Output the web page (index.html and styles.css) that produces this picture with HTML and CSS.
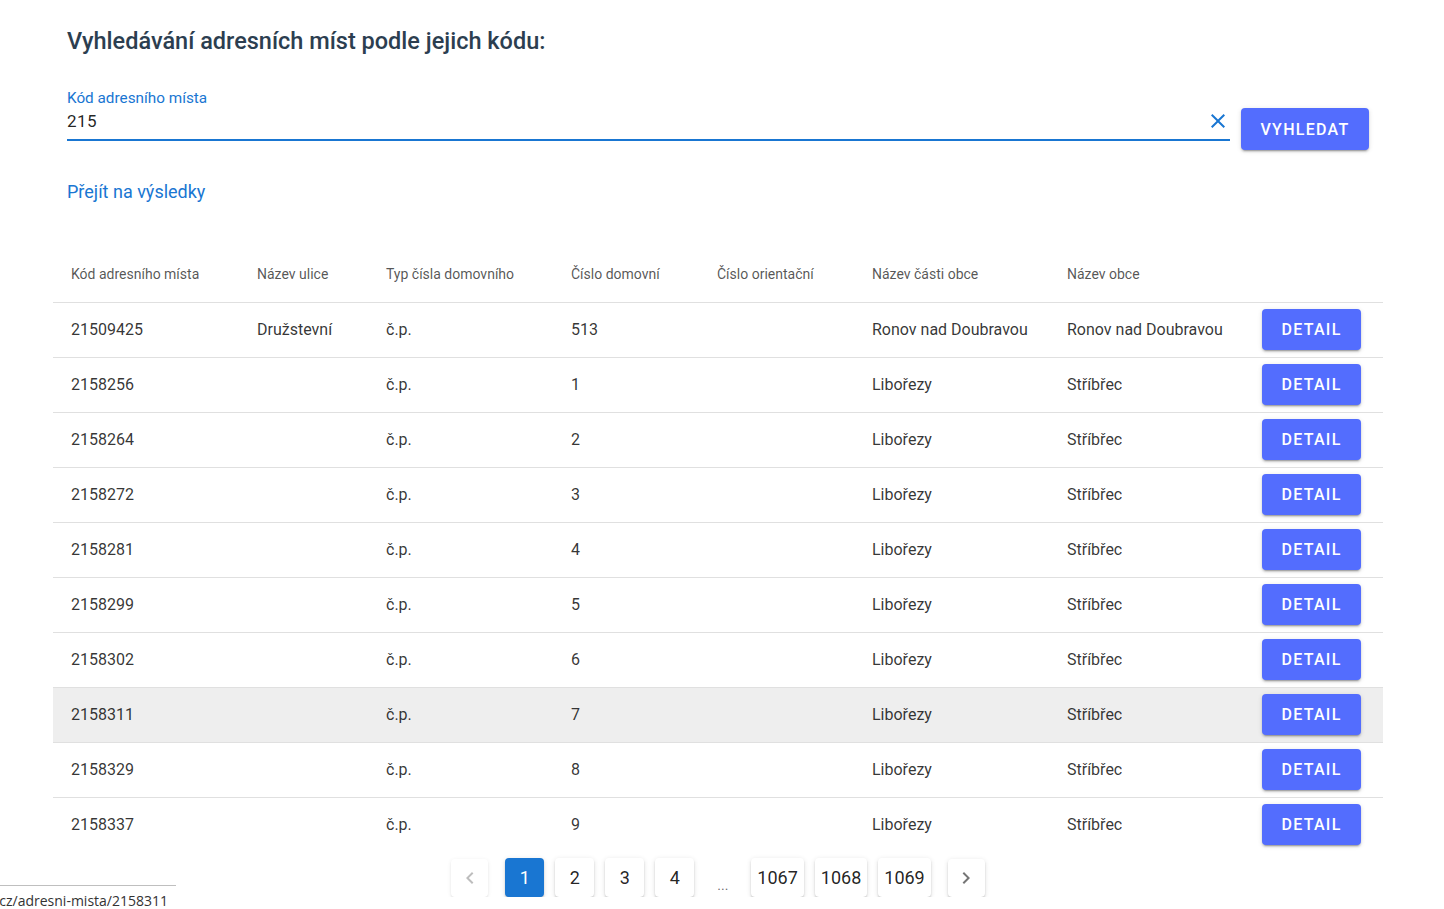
FILE: index.html
```html
<!DOCTYPE html>
<html lang="cs">
<head>
<meta charset="utf-8">
<title>Vyhledávání adresních míst</title>
<link rel="stylesheet" href="styles.css">
</head>
<body>
<main class="page">
  <h1 class="title">Vyhledávání adresních míst podle jejich kódu:</h1>

  <div class="search-row">
    <div class="field">
      <label class="field-label">Kód adresního místa</label>
      <div class="field-input">
        <span class="field-value">215</span>
        <svg class="clear-icon" viewBox="0 0 24 24" width="24" height="24"><path d="M19 6.41 17.59 5 12 10.59 6.41 5 5 6.41 10.59 12 5 17.59 6.41 19 12 13.41 17.59 19 19 17.59 13.41 12z" fill="#1976d2"/></svg>
      </div>
    </div>
    <button class="btn btn-search">VYHLEDAT</button>
  </div>

  <a class="results-link" href="#">Přejít na výsledky</a>

  <table class="data-table">
    <colgroup>
      <col class="c1"><col class="c2"><col class="c3"><col class="c4"><col class="c5"><col class="c6"><col class="c7"><col class="c8">
    </colgroup>
    <thead>
      <tr>
        <th>Kód adresního místa</th>
        <th>Název ulice</th>
        <th>Typ čísla domovního</th>
        <th>Číslo domovní</th>
        <th>Číslo orientační</th>
        <th>Název části obce</th>
        <th>Název obce</th>
        <th></th>
      </tr>
    </thead>
    <tbody>
      <tr><td>21509425</td><td>Družstevní</td><td>č.p.</td><td>513</td><td></td><td>Ronov nad Doubravou</td><td>Ronov nad Doubravou</td><td><button class="btn btn-detail">DETAIL</button></td></tr>
      <tr><td>2158256</td><td></td><td>č.p.</td><td>1</td><td></td><td>Libořezy</td><td>Stříbřec</td><td><button class="btn btn-detail">DETAIL</button></td></tr>
      <tr><td>2158264</td><td></td><td>č.p.</td><td>2</td><td></td><td>Libořezy</td><td>Stříbřec</td><td><button class="btn btn-detail">DETAIL</button></td></tr>
      <tr><td>2158272</td><td></td><td>č.p.</td><td>3</td><td></td><td>Libořezy</td><td>Stříbřec</td><td><button class="btn btn-detail">DETAIL</button></td></tr>
      <tr><td>2158281</td><td></td><td>č.p.</td><td>4</td><td></td><td>Libořezy</td><td>Stříbřec</td><td><button class="btn btn-detail">DETAIL</button></td></tr>
      <tr><td>2158299</td><td></td><td>č.p.</td><td>5</td><td></td><td>Libořezy</td><td>Stříbřec</td><td><button class="btn btn-detail">DETAIL</button></td></tr>
      <tr><td>2158302</td><td></td><td>č.p.</td><td>6</td><td></td><td>Libořezy</td><td>Stříbřec</td><td><button class="btn btn-detail">DETAIL</button></td></tr>
      <tr class="hover"><td>2158311</td><td></td><td>č.p.</td><td>7</td><td></td><td>Libořezy</td><td>Stříbřec</td><td><button class="btn btn-detail">DETAIL</button></td></tr>
      <tr><td>2158329</td><td></td><td>č.p.</td><td>8</td><td></td><td>Libořezy</td><td>Stříbřec</td><td><button class="btn btn-detail">DETAIL</button></td></tr>
      <tr class="last"><td>2158337</td><td></td><td>č.p.</td><td>9</td><td></td><td>Libořezy</td><td>Stříbřec</td><td><button class="btn btn-detail">DETAIL</button></td></tr>
    </tbody>
  </table>

  <nav class="pagination">
    <button class="pg pg-nav disabled"><svg viewBox="0 0 24 24" width="24" height="24"><path d="M15.41 16.58 10.83 12l4.58-4.59L14 6l-6 6 6 6z" fill="currentColor"/></svg></button>
    <button class="pg active">1</button>
    <button class="pg">2</button>
    <button class="pg">3</button>
    <button class="pg">4</button>
    <span class="pg-more">...</span>
    <button class="pg">1067</button>
    <button class="pg">1068</button>
    <button class="pg">1069</button>
    <button class="pg pg-nav"><svg viewBox="0 0 24 24" width="24" height="24"><path d="M8.59 16.58 13.17 12 8.59 7.41 10 6l6 6-6 6z" fill="currentColor"/></svg></button>
  </nav>
</main>

<div class="status-bar"><span>cz/adresni-mista/2158311</span></div>
</body>
</html>
```

FILE: styles.css
```css
* { box-sizing: border-box; }

html, body {
  margin: 0;
  padding: 0;
  background: #ffffff;
  font-family: Roboto, "Liberation Sans", Arial, sans-serif;
  color: rgba(0, 0, 0, 0.87);
}

.page {
  padding: 0 61px 0 53px;
}

.title {
  margin: 0;
  padding: 25px 0 0 14px;
  font-size: 23.5px;
  line-height: 32px;
  font-weight: 500;
  color: #2c3e50;
}

.search-row {
  display: flex;
  align-items: flex-start;
  margin: 33px 14px 0 14px;
}

.field {
  flex: 1;
  display: flex;
  flex-direction: column;
}

.field-label {
  font-size: 15.3px;
  line-height: 16px;
  color: #1976d2;
  height: 16px;
}

.field-input {
  display: flex;
  align-items: flex-start;
  justify-content: space-between;
  height: 35px;
  border-bottom: 2px solid #1976d2;
  padding-top: 3px;
}

.field-value {
  font-size: 17px;
  line-height: 24px;
  letter-spacing: 0.5px;
  color: rgba(0, 0, 0, 0.87);
}

.clear-icon {
  margin-right: 0;
}

.btn {
  border: none;
  background: #536dfe;
  color: #ffffff;
  font-family: Roboto, "Liberation Sans", Arial, sans-serif;
  font-weight: 500;
  font-size: 16px;
  letter-spacing: 0.08em;
  border-radius: 4px;
  box-shadow: 0 3px 1px -2px rgba(0,0,0,.2), 0 2px 2px 0 rgba(0,0,0,.14), 0 1px 5px 0 rgba(0,0,0,.12);
  cursor: pointer;
}

.btn-search {
  margin: 18px 0 0 11px;
  width: 128px;
  height: 42px;
}

.results-link {
  display: inline-block;
  margin: 30px 0 0 14px;
  font-size: 18px;
  line-height: 24px;
  color: #1976d2;
  text-decoration: none;
}

.data-table {
  width: 1330px;
  margin-top: 43px;
  border-collapse: collapse;
  table-layout: fixed;
}

.c1 { width: 186px; }
.c2 { width: 129px; }
.c3 { width: 185px; }
.c4 { width: 146px; }
.c5 { width: 155px; }
.c6 { width: 195px; }
.c7 { width: 195px; }
.c8 { width: 139px; }

.data-table th {
  height: 55px;
  padding: 0 0 0 18px;
  text-align: left;
  font-size: 14px;
  font-weight: 400;
  color: rgba(0, 0, 0, 0.68);
  border-bottom: 1px solid #e0e0e0;
  white-space: nowrap;
}

.data-table td {
  height: 55px;
  padding: 0 0 0 18px;
  font-size: 16px;
  color: rgba(0, 0, 0, 0.8);
  border-bottom: 1px solid #e0e0e0;
  white-space: nowrap;
}

.data-table tr.hover td {
  background: #eeeeee;
}

.data-table tr.last td {
  border-bottom: none;
}

.btn-detail {
  width: 99px;
  height: 41px;
  display: block;
}

.pagination {
  display: flex;
  justify-content: center;
  align-items: center;
  gap: 11px;
  margin-top: 6px;
  width: 1330px;
}

.pg {
  height: 39px;
  min-width: 39px;
  padding: 0 6px;
  border: none;
  background: #ffffff;
  border-radius: 4px;
  font-family: Roboto, "Liberation Sans", Arial, sans-serif;
  font-size: 18px;
  color: rgba(0, 0, 0, 0.87);
  box-shadow: 0 3px 1px -2px rgba(0,0,0,.2), 0 2px 2px 0 rgba(0,0,0,.14), 0 1px 5px 0 rgba(0,0,0,.12);
  display: flex;
  align-items: center;
  justify-content: center;
}

.pg.active {
  background: #1976d2;
  color: #ffffff;
}

.pg-nav {
  width: 37px;
  min-width: 37px;
  height: 38px;
  color: rgba(0, 0, 0, 0.54);
  margin: 0 6px;
}

.pg-nav.disabled {
  color: rgba(0, 0, 0, 0.26);
  box-shadow: 0 2px 2px 0 rgba(0,0,0,.06), 0 1px 4px 0 rgba(0,0,0,.08);
}

.pg-more {
  font-size: 14px;
  color: rgba(0, 0, 0, 0.6);
  padding: 14px 12px 0;
}

.status-bar {
  position: fixed;
  left: 0;
  bottom: 0;
  width: 176px;
  height: 24px;
  background: #ffffff;
  border-top: 1px solid #bfbfbf;
  display: flex;
  justify-content: flex-end;
  overflow: hidden;
  padding: 6px 8px 0 0;
  font-family: "Open Sans", "Noto Sans", sans-serif;
  font-size: 14px;
  line-height: 18px;
  color: #333333;
  white-space: nowrap;
}

.status-bar span {
  flex-shrink: 0;
}
```
